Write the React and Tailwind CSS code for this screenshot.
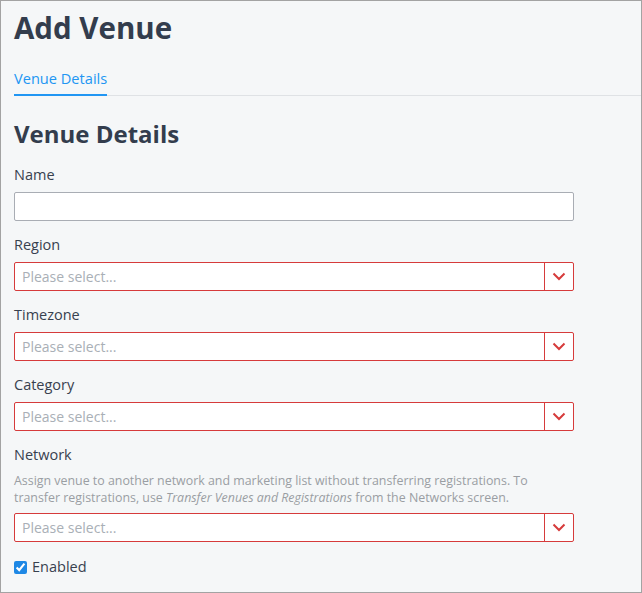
import React from "react";

// Red chevron used on the select controls
function Chevron() {
  return (
    <svg width="14" height="9" viewBox="0 0 14 9" fill="none">
      <path d="M1.5 1.5 L7 7 L12.5 1.5" stroke="#d63b3b" strokeWidth="2" />
    </svg>
  );
}

function Label({ children }) {
  return (
    <div className="text-[14.5px] leading-[20px] font-medium text-[#38414f] mb-[7px]">
      {children}
    </div>
  );
}

function SelectBox() {
  return (
    <div className="flex w-[560px] h-[29px] border border-[#d63b3b] rounded-[2px] bg-white">
      <div className="flex-1 flex items-center px-[7px] text-[14px] text-[#a9afb6]">
        Please select...
      </div>
      <div className="w-[29px] flex items-center justify-center border-l border-[#d63b3b]">
        <Chevron />
      </div>
    </div>
  );
}

function SelectField({ label }) {
  return (
    <div className="mt-[14px]">
      <Label>{label}</Label>
      <SelectBox />
    </div>
  );
}

export default function App() {
  return (
    <div
      className="min-h-[593px] w-[642px] border border-[#a3a3a3] bg-[#f5f7f8] px-[13px] text-[#38414f]"
      style={{ fontFamily: '"Open Sans", sans-serif' }}
    >
      <h1 className="mt-[8px] text-[29.5px] leading-[38px] font-bold text-[#333d4d]">
        Add Venue
      </h1>

      <div className="mt-[21px] flex border-b border-[#dfe2e5] -mr-[13px]">
        <div className="pb-[6px] border-b-2 border-[#2196f3] text-[14.6px] leading-[20px] text-[#2196f3] -mb-[1px]">
          Venue Details
        </div>
      </div>

      <h2 className="mt-[23px] text-[24px] leading-[30px] font-bold text-[#333d4d]">
        Venue Details
      </h2>

      <div className="mt-[16px]">
        <Label>Name</Label>
        <div className="w-[560px] h-[29px] border border-[#a9adb4] rounded-[2px] bg-white" />
      </div>

      <SelectField label="Region" />
      <SelectField label="Timezone" />
      <SelectField label="Category" />

      <div className="mt-[14px]">
        <div className="text-[14.5px] leading-[20px] font-medium text-[#38414f]">Network</div>
        <p className="mt-[7px] mb-[7px] w-[550px] text-[12.4px] leading-[17px] text-[#9a9ea3]">
          Assign venue to another network and marketing list without transferring registrations. To
          transfer registrations, use <em>Transfer Venues and Registrations</em> from the Networks screen.
        </p>
        <SelectBox />
      </div>

      <label className="mt-[15px] flex items-center gap-[5px] text-[14.5px] leading-[20px] text-[#38414f]">
        <input
          type="checkbox"
          checked
          readOnly
          className="m-0 w-[13px] h-[13px] accent-[#1e88e5]"
        />
        Enabled
      </label>
    </div>
  );
}
